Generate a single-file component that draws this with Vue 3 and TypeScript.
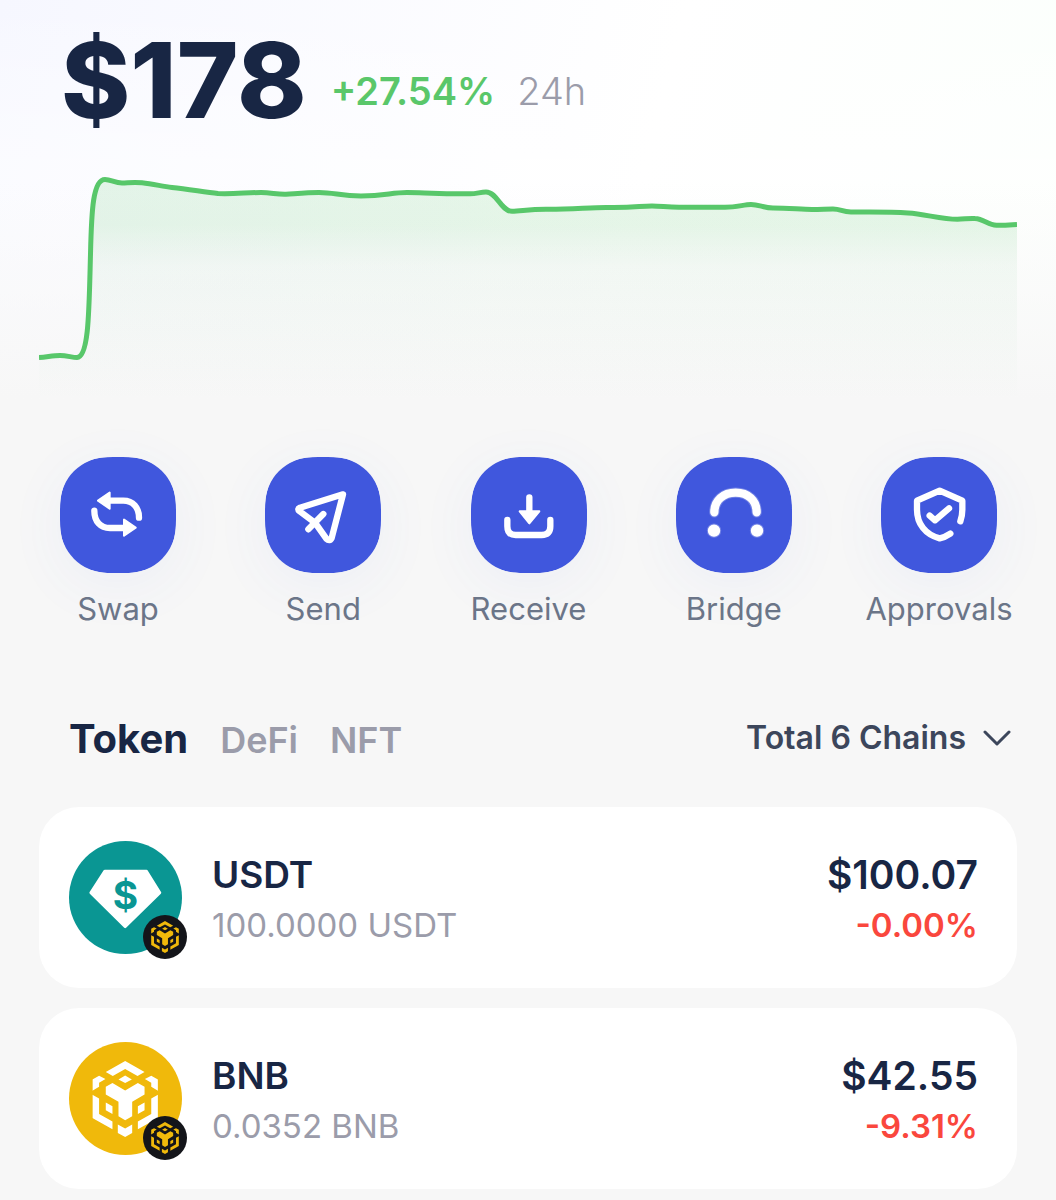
<script setup lang="ts">
import { ref } from 'vue'

interface Action {
  id: string
  label: string
}

interface Token {
  symbol: string
  amount: string
  value: string
  change: string
}

const tabs: string[] = ['Token', 'DeFi', 'NFT']
const activeTab = ref<string>('Token')
const chain = ref<string>('all')

const actions: Action[] = [
  { id: 'swap', label: 'Swap' },
  { id: 'send', label: 'Send' },
  { id: 'receive', label: 'Receive' },
  { id: 'bridge', label: 'Bridge' },
  { id: 'approvals', label: 'Approvals' },
]

const tokens: Token[] = [
  { symbol: 'USDT', amount: '100.0000 USDT', value: '$100.07', change: '-0.00%' },
  { symbol: 'BNB', amount: '0.0352 BNB', value: '$42.55', change: '-9.31%' },
]

// Balance history over the last 24 hours
const line =
  'M0 187.5C8 187 14 185.500 21 185.500C28 185.500 33 187.500 38 187.500C50 187 50 140 51.500 84C52.500 40 54 9.500 66 9.500C72 9.500 76 13 83 13C90 12.800 95 12 103 12.800C114 14 122 16 133 17.500C150 19.500 166 22 179 23.500C194 24.200 208 22.500 222 22.500C232 22.500 238 24.500 247 24.200C258 23.500 268 22.500 280 22.500C295 22.500 302 26 322 26C346 26 352 22.500 368 22.500C384 22.500 392 23.800 431 23.800C438 23.800 441 22 447 22C458 22 462 41.300 473 41.300C482 41.300 489 39.300 507 39.300C532 39.500 550 37.500 567 37.500C596 38 600 36 613 36C622 36 628 37.300 640 37.300H686C698 37.300 705 34.500 712 34.500C720 34.500 725 38 734 38C750 38 762 39.500 773 39.500C782 39.500 787 39 794 39C802 39 803 42 812 42C832 42 850 41.500 869 43C886 44 902 49.300 918.500 49.300C925 49.300 930 48 936 48.500C945 49 949 55 957.500 55.300C965 55.500 970 55 978 54.500'
const area = `${line}V230H0Z`
</script>

<template>
  <main class="wallet">
    <!-- The cube mark shared by the BNB coin and the chain badges -->
    <svg class="defs" aria-hidden="true">
      <symbol id="cube" viewBox="97 95 196 227">
        <path
          d="M195 95l58 33-21 12-37-21-37 21-21-12zM195 138l20 12-20 11-20-11zM157 161l38 22 38-22 20 11v23l-37 22v43l-21 12-20-12v-43l-38-22v-23zM97 150l20-11 19 10-19 11v12l-20 12zM293 150l-20-11-19 10 19 11v12l20 12zM97 196l20 11v46l40 23v23l-60-34zM293 196l-20 11v46l-40 23v23l60-34zM137 219l20 11v23l-20-11zM253 219l-20 11v23l20-11zM173 285l22 12 21-12v25l-21 12-22-12z"
          fill="currentColor"
        />
      </symbol>
    </svg>

    <header class="balance">
      <h1 class="total">$178</h1>
      <span class="gain">+27.54%</span>
      <span class="period">24h</span>
    </header>

    <svg class="chart" viewBox="0 0 978 230" role="img" aria-label="Balance over 24 hours">
      <defs>
        <linearGradient id="fade" gradientUnits="userSpaceOnUse" x1="0" y1="0" x2="0" y2="230">
          <stop offset="0" stop-color="#5ac76a" stop-opacity="0.15" />
          <stop offset="0.24" stop-color="#5ac76a" stop-opacity="0.15" />
          <stop offset="0.42" stop-color="#6dbd80" stop-opacity="0.07" />
          <stop offset="0.75" stop-color="#6dbd80" stop-opacity="0.03" />
          <stop offset="1" stop-color="#6dbd80" stop-opacity="0" />
        </linearGradient>
      </defs>
      <path :d="area" fill="url(#fade)" />
      <path :d="line" fill="none" stroke="#58c76a" stroke-width="5" />
    </svg>

    <nav class="actions" aria-label="Wallet actions">
      <button v-for="action in actions" :key="action.id" class="action" type="button">
        <svg class="tile" viewBox="60 50 348 348" aria-hidden="true">
          <path
            d="M60 210C60 103 113 50 220 50H248C355 50 408 103 408 210V238C408 345 355 398 248 398H220C113 398 60 345 60 238Z"
            fill="#4057dd"
          />
          <g fill="none" stroke="#fff" stroke-width="19" stroke-linecap="round" stroke-linejoin="round">
            <template v-if="action.id === 'swap'">
              <path d="M208 181H250C279 181 297 201 297 232M163 211C163 243 181 263 210 263H252" />
              <path
                d="M174 181L209 157V205ZM287 262L252 238V286Z"
                fill="#fff"
                stroke-width="6"
              />
            </template>
            <template v-else-if="action.id === 'send'">
              <path d="M294 162L165 202Q156 206 163 212L210 247L244 295Q254 305 260 293Z" />
              <path d="M235 221L190 267" />
            </template>
            <template v-else-if="action.id === 'receive'">
              <path d="M235 171V215M169 239V258Q169 284 194 284H272Q298 284 298 258V239" />
              <path d="M206 213H265L235 249Z" fill="#fff" stroke-width="6" />
            </template>
            <template v-else-if="action.id === 'bridge'">
              <g stroke="#fff" stroke-opacity="0.25" stroke-width="31">
                <path d="M175 216C175 180 202 157 239 157S302 180 302 216" />
                <path d="M174 271h.1M303 271h.1" stroke-width="43" />
              </g>
              <path d="M175 216C175 180 202 157 239 157S302 180 302 216" stroke-width="25" />
              <path d="M174 271h.1M303 271h.1" stroke-width="37" />
            </template>
            <template v-else>
              <path
                d="M268 280Q252 291 236 294C193 283 168 250 168 208V181L236 151L304 181V208Q304 226 298 243"
              />
              <path d="M206 226L222 240L264 204" />
            </template>
          </g>
        </svg>
        <span class="action-label">{{ action.label }}</span>
      </button>
    </nav>

    <div class="toolbar">
      <div class="tabs" role="tablist">
        <button
          v-for="tab in tabs"
          :key="tab"
          class="tab"
          :class="{ active: tab === activeTab }"
          type="button"
          role="tab"
          :aria-selected="tab === activeTab"
          @click="activeTab = tab"
        >
          {{ tab }}
        </button>
      </div>
      <div class="chains">
        <select v-model="chain" class="chain-select" aria-label="Chains">
          <option value="all">Total 6 Chains</option>
        </select>
        <svg class="chevron" viewBox="0 0 28 18" aria-hidden="true">
          <path
            d="M2 3L14 15L26 3"
            fill="none"
            stroke="#3c465b"
            stroke-width="3"
            stroke-linecap="round"
            stroke-linejoin="round"
          />
        </svg>
      </div>
    </div>

    <ul class="tokens">
      <li v-for="token in tokens" :key="token.symbol" class="token">
        <div class="coin">
          <svg v-if="token.symbol === 'USDT'" class="coin-art" viewBox="27 34 338 338" aria-hidden="true">
            <circle cx="196" cy="203" r="169" fill="#0a9693" />
            <path
              d="M134 124H259L299 189L195 291L92 189Z"
              fill="#fff"
              stroke="#fff"
              stroke-width="8"
              stroke-linejoin="round"
            />
            <text class="dollar" x="196" y="236" text-anchor="middle" fill="#0a9693">$</text>
          </svg>
          <svg v-else class="coin-art" viewBox="27 38 338 338" aria-hidden="true">
            <circle cx="196" cy="207" r="169" fill="#f0b90b" />
            <use href="#cube" x="97" y="95" width="196" height="227" color="#fff" />
          </svg>
          <span class="badge">
            <svg class="badge-art" aria-hidden="true"><use href="#cube" /></svg>
          </span>
        </div>
        <div class="info">
          <span class="symbol">{{ token.symbol }}</span>
          <span class="amount">{{ token.amount }}</span>
        </div>
        <div class="info worth">
          <span class="value">{{ token.value }}</span>
          <span class="change">{{ token.change }}</span>
        </div>
      </li>
    </ul>
  </main>
</template>

<style>
body {
  background: #f7f7f7;
}
</style>

<style scoped>
.wallet {
  box-sizing: border-box;
  min-height: 100vh;
  padding: 26px 39px 10px;
  font-family: Inter, "Liberation Sans", sans-serif;
  color: #182644;
  background:
    linear-gradient(180deg, rgba(247, 247, 247, 0) 0, rgba(247, 247, 247, 0) 180px, #f7f7f7 400px),
    linear-gradient(180deg, rgba(255, 255, 255, 0) 0, rgba(255, 255, 255, 0.5) 160px),
    linear-gradient(105deg, #f6f7ff 0%, #fff 50%, #f9fffa 100%);
}

.defs {
  position: absolute;
  width: 0;
  height: 0;
}

.balance {
  display: flex;
  align-items: flex-end;
  padding-left: 22px;
}

.total {
  margin: 0 24px 0 0;
  font-size: 105px;
  line-height: 108px;
  font-weight: 800;
}

.gain,
.period {
  margin-bottom: 19px;
  font-size: 38px;
  line-height: 48px;
}

.gain {
  margin-right: 22px;
  font-weight: 600;
  color: #5ac76a;
}

.period {
  font-weight: 300;
  color: #9b9caa;
}

.chart {
  display: block;
  width: 100%;
  margin-top: 36px;
}

.actions {
  display: flex;
  justify-content: space-between;
  margin-top: 57px;
  padding: 0 20px 0 21px;
}

.action {
  display: flex;
  flex-direction: column;
  align-items: center;
  gap: 16px;
  width: 116px;
  padding: 0;
  border: 0;
  background: none;
  font: inherit;
  cursor: pointer;
}

.tile {
  flex: none;
  width: 116px;
  height: 116px;
  border-radius: 48px;
  box-shadow: 0 12px 60px rgba(64, 100, 221, 0.06);
}

.action-label {
  font-size: 31px;
  line-height: 40px;
  white-space: nowrap;
  color: #6b7588;
}

.toolbar {
  display: flex;
  align-items: center;
  justify-content: space-between;
  margin-top: 84px;
  padding: 0 6px 0 30px;
}

.tabs {
  display: flex;
  align-items: baseline;
  gap: 32px;
}

.tab {
  padding: 0;
  border: 0;
  background: none;
  font: inherit;
  font-size: 36px;
  line-height: 52px;
  font-weight: 600;
  color: #9b9caa;
  cursor: pointer;
}

.tab.active {
  font-size: 40px;
  font-weight: 700;
  color: #182644;
}

.chains {
  display: flex;
  align-items: center;
  gap: 17px;
  padding-bottom: 4px;
}

.chain-select {
  appearance: none;
  padding: 0;
  border: 0;
  background: none;
  font: inherit;
  font-size: 32px;
  line-height: 44px;
  font-weight: 600;
  color: #3c465b;
  cursor: pointer;
}

.chevron {
  width: 28px;
  height: 18px;
  pointer-events: none;
}

.tokens {
  display: flex;
  flex-direction: column;
  gap: 20px;
  margin: 41px 0 0;
  padding: 0;
  list-style: none;
}

.token {
  display: flex;
  align-items: center;
  gap: 30px;
  padding: 34px 39px 34px 30px;
  border-radius: 40px;
  background: #fff;
}

.coin {
  position: relative;
  flex: none;
  width: 113px;
  height: 113px;
}

.coin-art {
  display: block;
  width: 100%;
  height: 100%;
}

.dollar {
  font-size: 116px;
  font-weight: 700;
}

.badge {
  position: absolute;
  right: -5px;
  bottom: -5px;
  display: flex;
  align-items: center;
  justify-content: center;
  width: 44px;
  height: 44px;
  border-radius: 50%;
  background: #14151a;
  color: #f0b90b;
}

.badge-art {
  width: 28px;
  height: 32px;
}

.info {
  display: flex;
  flex: 1;
  flex-direction: column;
  gap: 4px;
  padding-top: 2px;
}

.worth {
  flex: none;
  text-align: right;
}

.symbol,
.value {
  line-height: 48px;
  font-weight: 600;
}

.symbol {
  font-size: 37px;
}

.value {
  font-size: 39px;
}

.amount,
.change {
  font-size: 33px;
  line-height: 44px;
}

.amount {
  color: #9b9caa;
}

.change {
  font-weight: 600;
  color: #fa473d;
}
</style>
